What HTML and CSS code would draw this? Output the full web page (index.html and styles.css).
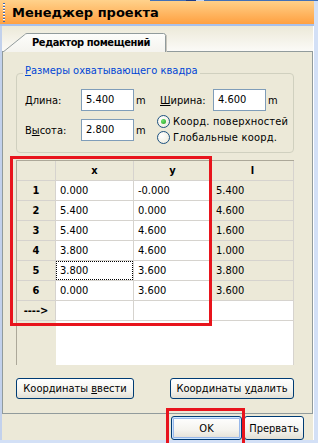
FILE: index.html
```html
<!DOCTYPE html>
<html>
<head>
	<title>Менеджер проекта</title>
	<meta charset="utf-8">
	<link rel="stylesheet" href="styles.css">
</head>
<body>

	<div class="window">
		<div class="topline"></div>
		<div class="titlebar">
			<span class="grip"></span>
			<span class="title">Менеджер проекта</span>
		</div>

		<div class="client">
			<div class="tabstrip">
				<div class="tab">
					<svg class="tab-shape" width="166" height="19" viewBox="0 0 166 19">
						<defs>
							<linearGradient id="tabfill" x1="0" y1="0" x2="0" y2="1">
								<stop offset="0" stop-color="#fdfdfb"/>
								<stop offset="1" stop-color="#f4f3ee"/>
							</linearGradient>
						</defs>
						<path d="M0.5 19.5 L22.5 1.8 Q23.6 0.5 25 0.5 L161.5 0.5 Q163.5 0.5 163.5 2.5 L163.5 19.5 Z" fill="url(#tabfill)" stroke="#919b9c"/>
						<line x1="164.5" y1="2" x2="164.5" y2="19" stroke="#c9c6bc"/>
					</svg>
					<span class="tab-label">Редактор помещений</span>
				</div>
			</div>

			<div class="page">
				<fieldset class="bounds">
					<legend><u>Р</u>азмеры охватывающего квадра</legend>
					<div class="bounds-grid">
						<label class="lbl"><u>Д</u>лина:</label>
						<div class="field">5.400</div>
						<span class="unit">m</span>
						<label class="lbl lbl-2"><u>Ш</u>ирина:</label>
						<div class="field">4.600</div>
						<span class="unit">m</span>

						<label class="lbl">В<u>ы</u>сота:</label>
						<div class="field">2.800</div>
						<span class="unit">m</span>
						<div class="radios">
							<div class="radio"><span class="dot checked"></span>Коорд. поверхностей</div>
							<div class="radio"><span class="dot"></span>Глобальные коорд.</div>
						</div>
					</div>
				</fieldset>

				<div class="grid-wrap">
					<div class="coords">
						<div class="hd"></div><div class="hd">x</div><div class="hd">y</div><div class="hd">l</div>
						<div class="rh">1</div><div class="c">0.000</div><div class="c">-0.000</div><div class="c ro">5.400</div>
						<div class="rh">2</div><div class="c">5.400</div><div class="c">0.000</div><div class="c ro">4.600</div>
						<div class="rh">3</div><div class="c">5.400</div><div class="c">4.600</div><div class="c ro">1.600</div>
						<div class="rh">4</div><div class="c">3.800</div><div class="c">4.600</div><div class="c ro">1.000</div>
						<div class="rh">5</div><div class="c focus">3.800</div><div class="c">3.600</div><div class="c ro">3.800</div>
						<div class="rh">6</div><div class="c">0.000</div><div class="c">3.600</div><div class="c ro">3.600</div>
						<div class="rh">----&gt;</div><div class="c"></div><div class="c"></div><div class="c"></div>
						<div class="fill"></div>
					</div>
					<div class="mark mark-grid"></div>
				</div>

				<div class="actions">
					<button class="btn btn-add">Координаты <u>в</u>вести</button>
					<button class="btn btn-del">Координаты <u>у</u>далить</button>
				</div>
			</div>

			<div class="footer">
				<div class="ok-wrap">
					<button class="btn btn-ok">OK</button>
					<div class="mark mark-ok"></div>
				</div>
				<button class="btn btn-cancel">Прервать</button>
			</div>
		</div>
	</div>

</body>
</html>
```

FILE: styles.css
```css
* {
	box-sizing: border-box;
}
body {
	margin: 0;
	width: 318px;
	height: 443px;
	overflow: hidden;
	background: #d3e0f6;
	font-family: "DejaVu Sans Condensed", "DejaVu Sans", sans-serif;
	font-size: 11px;
	color: #000;
}
u {
	text-decoration: underline;
}

/* window frame */
.window {
	position: relative;
	width: 314px;
}
.topline {
	position: absolute;
	top: 0;
	left: 0;
	width: 318px;
	height: 1px;
	background: linear-gradient(to right, transparent 0 150px, #4170b8 150px 186px, #1c3c8a 186px 196px, #c5d6f2 196px 204px, #4170b8 204px);
}
.titlebar {
	height: 26px;
	display: flex;
	align-items: center;
	gap: 7px;
	padding: 0 0 2px 3px;
	background: linear-gradient(#ffd28c, #ffa040) top / 100% 24px no-repeat, #a9c0ea;
}
.grip {
	width: 2px;
	height: 19px;
	background: repeating-linear-gradient(#3e66b2 0 1px, #ffffff 1px 2px, transparent 2px 3px);
}
.title {
	font-family: "DejaVu Sans", sans-serif;
	font-weight: bold;
	font-size: 13px;
}

.client {
	background: #ece9d8;
	border-left: 2px solid #c2d1ec;
	border-right: 1px solid #ffffff;
}

/* tab */
.tabstrip {
	height: 26px;
	display: flex;
	align-items: flex-end;
	border-bottom: 1px solid #919b9c;
	background: linear-gradient(#ece9d8, #fbfaf7);
}
.tab {
	position: relative;
	width: 166px;
	height: 19px;
	margin-bottom: -1px;
	z-index: 1;
}
.tab-shape {
	position: absolute;
	top: 0;
	left: 0;
}
.tab-label {
	position: relative;
	display: block;
	padding-left: 30px;
	line-height: 19px;
	font-weight: bold;
	letter-spacing: -0.4px;
}

.page {
	height: 362px;
	border: 1px solid #919b9c;
	border-top: 0;
	padding: 12px 18px 0 13px;
}

/* group box */
fieldset.bounds {
	margin: 0;
	width: 278px;
	min-width: 0;
	border: 1px solid #d0d0bf;
	border-radius: 4px;
	padding: 7px 8px 11px 8px;
}
fieldset.bounds legend {
	color: #0046d5;
	line-height: 13px;
	padding: 0 2px 5px 2px;
	margin-left: -2px;
}
.bounds-grid {
	display: grid;
	grid-template-columns: 56px 53px 21px 58px 53px auto;
	grid-template-rows: 22px 22px;
	row-gap: 8px;
	align-items: center;
}
.lbl-2 {
	padding-left: 5px;
}
.field {
	height: 22px;
	border: 1px solid #7f9db9;
	background: #ffffff;
	padding-left: 4px;
	line-height: 20px;
}
.unit {
	padding-left: 2px;
}
.radios {
	grid-column: 4 / span 3;
	align-self: start;
	margin-top: -6px;
	padding-left: 2px;
}
.radio {
	display: flex;
	align-items: center;
	gap: 3px;
	height: 16px;
	white-space: nowrap;
	letter-spacing: 0.2px;
}
.dot {
	position: relative;
	width: 13px;
	height: 13px;
	border: 1px solid #1c5180;
	border-radius: 50%;
	background: radial-gradient(circle at 35% 35%, #ffffff, #ece9d8);
}
.dot.checked::after {
	content: "";
	position: absolute;
	left: 3px;
	top: 3px;
	width: 5px;
	height: 5px;
	border-radius: 50%;
	background: radial-gradient(circle at 35% 35%, #6fe26f, #21a121);
}

/* coordinates grid */
.grid-wrap {
	position: relative;
	margin-top: 7px;
}
.coords {
	display: grid;
	grid-template-columns: 38px 77px 77px 81px;
	grid-template-rows: repeat(8, 19px) 44px;
	gap: 1px;
	background: #d6d3ce;
	border-left: 1px solid #aca899;
	border-top: 1px solid #aca899;
	padding-right: 1px;
}
.hd, .rh {
	background: #ece9d8;
	font-weight: bold;
	text-align: center;
	line-height: 19px;
}
.c {
	background: #ffffff;
	padding-left: 4px;
	line-height: 19px;
}
.c.ro {
	background: #ece9d8;
}
.c.focus {
	outline: 1px dotted #000000;
	outline-offset: -1px;
}
.fill {
	grid-column: 1 / -1;
	background: linear-gradient(to right, #ece9d8 39px, #ffffff 39px);
}

.mark {
	position: absolute;
	border: 3px solid #e8141c;
	pointer-events: none;
}
.mark-grid {
	left: -6px;
	top: -4px;
	width: 202px;
	height: 170px;
}

/* buttons */
.actions {
	display: flex;
	justify-content: space-between;
	margin-top: 13px;
}
.btn {
	height: 21px;
	border: 1px solid #003c74;
	border-radius: 3px;
	background: linear-gradient(#ffffff, #f4f3ee 60%, #e2dfd4);
	font: inherit;
	color: #000;
	padding: 0;
}
.btn-add {
	width: 118px;
}
.btn-del {
	width: 124px;
}

.footer {
	height: 26px;
	display: flex;
	justify-content: flex-end;
	gap: 2px;
	padding: 2px 9px 0 0;
}
.ok-wrap {
	position: relative;
}
.btn-ok {
	width: 71px;
	height: 24px;
	box-shadow: inset 0 0 0 1px #cee7ff, inset 0 0 0 2px #98b8ea;
}
.btn-cancel {
	width: 60px;
	height: 24px;
}
.mark-ok {
	left: -5px;
	top: -8px;
	width: 79px;
	height: 40px;
}
```
